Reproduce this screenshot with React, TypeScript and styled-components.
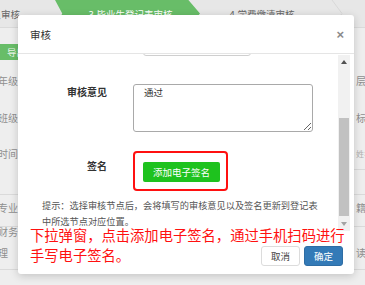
import React from 'react';
import styled, { createGlobalStyle } from 'styled-components';

const GlobalStyle = createGlobalStyle`
  html, body {
    margin: 0;
    padding: 0;
  }
  body {
    font-family: "Noto Sans CJK SC", "Noto Sans", sans-serif;
    background: #eeeeee;
  }
`;

type RowData = {
  h: number;
  left?: string[];
  right?: string[];
  button?: boolean;
  line?: boolean;
  small?: boolean;
  top?: boolean;
};

const rows: RowData[] = [
  { h: 32, button: true },
  { h: 28, left: ['年级'], right: ['层次'] },
  { h: 44, left: ['班级'], right: ['标识'] },
  { h: 26, left: ['时间'], right: ['姓名'], small: true },
  { h: 24, line: true },
  { h: 31, left: ['专业'], right: ['籍贯'], line: true },
  { h: 42, left: ['财务', '理'], right: ['\u00a0', '读'], line: true, top: true },
];

const App = () => {
  return (
    <>
      <GlobalStyle />
      <Page>
        <StepBar>
          <Step $width={55} $align="flex-end" $pad={35}>
            2.辅导员审核
          </Step>
          <ActiveStep>3.毕业生登记表审核</ActiveStep>
          <Step $width={124} $align="center" $pad={0}>
            4.学费缴清审核
          </Step>
          <Divider width="14" height="27" viewBox="0 0 14 27">
            <polyline points="2,0 12,13.5 2,27" fill="none" stroke="#d8d8d8" strokeWidth="1" />
          </Divider>
        </StepBar>

        <FormArea>
          <SideCol $side="left">
            {rows.map((r, i) => (
              <SideRow key={i} $h={r.h} $line={r.line} $side="left" $top={r.top}>
                {r.button && <GreenTab>导出</GreenTab>}
                {r.left && (
                  <SideLabel>
                    {r.left.map((t, j) => (
                      <div key={j}>{t}</div>
                    ))}
                  </SideLabel>
                )}
              </SideRow>
            ))}
          </SideCol>
          <SideCol $side="right">
            {rows.map((r, i) => (
              <SideRow key={i} $h={r.h} $line={r.line || r.small} $side="right" $top={r.top}>
                {r.right && (
                  <SideLabel $small={r.small}>
                    {r.right.map((t, j) => (
                      <div key={j}>{t}</div>
                    ))}
                  </SideLabel>
                )}
              </SideRow>
            ))}
          </SideCol>
        </FormArea>

        <Modal>
          <ModalHeader>
            <ModalTitle>审核</ModalTitle>
            <CloseBtn>×</CloseBtn>
          </ModalHeader>

          <ModalBody>
            <ScrollArea>
              <ScrollInner $offset={24}>
                <FieldRow>
                  <FieldLabel />
                  <SelectBox />
                </FieldRow>

                <FieldRow $gap={28}>
                  <FieldLabel>审核意见</FieldLabel>
                  <Opinion readOnly defaultValue="通过" />
                </FieldRow>

                <FieldRow $gap={19}>
                  <FieldLabel $pt={7}>签名</FieldLabel>
                  <Highlight>
                    <SignButton>添加电子签名</SignButton>
                  </Highlight>
                </FieldRow>

                <Hint>提示：选择审核节点后，会将填写的审核意见以及签名更新到登记表中所选节点对应位置。</Hint>
              </ScrollInner>
            </ScrollArea>

            <Scrollbar>
              <ScrollArrow $dir="up" />
              <ScrollTrack>
                <ScrollThumb $top={49} $height={98} />
              </ScrollTrack>
              <ScrollArrow $dir="down" />
            </Scrollbar>
          </ModalBody>

          <ModalFooter>
            <FooterButton>取消</FooterButton>
            <FooterButton $primary>确定</FooterButton>
          </ModalFooter>

          <Annotation>
            下拉弹窗，点击添加电子签名，通过手机扫码进行
            <br />
            手写电子签名。
          </Annotation>
        </Modal>
      </Page>
    </>
  );
};

export default App;

const Page = styled.div`
  position: relative;
  width: 365px;
  height: 285px;
  overflow: hidden;
  background: #eeeeee;
`;

const StepBar = styled.div`
  display: flex;
  align-items: center;
  height: 27px;
  background: #e7e7e7;
  border-bottom: 1px solid #dadada;
  overflow: hidden;
`;

const Step = styled.div<{ $width: number; $align: string; $pad: number }>`
  display: flex;
  justify-content: ${p => p.$align};
  align-items: center;
  flex: none;
  width: ${p => p.$width}px;
  height: 100%;
  padding-right: ${p => p.$pad}px;
  box-sizing: border-box;
  overflow: hidden;
  white-space: nowrap;
  font-size: 9.5px;
  color: #666;
`;

const ActiveStep = styled.div`
  display: flex;
  align-items: center;
  justify-content: center;
  flex: none;
  width: 145px;
  height: 100%;
  padding-left: 6px;
  box-sizing: border-box;
  background: #68bd68;
  clip-path: polygon(0 0, 92% 0, 100% 50%, 92% 100%, 0 100%, 5% 50%);
  font-size: 9.5px;
  color: #ffffff;
  white-space: nowrap;
`;

const Divider = styled.svg`
  flex: none;
  margin-left: 6px;
`;

const FormArea = styled.div`
  display: flex;
  justify-content: space-between;
  padding-top: 8px;
`;

const SideCol = styled.div<{ $side: 'left' | 'right' }>`
  display: flex;
  flex-direction: column;
  width: ${p => (p.$side === 'left' ? 18 : 11)}px;
  overflow: hidden;
`;

const SideRow = styled.div<{ $h: number; $line?: boolean; $side: 'left' | 'right'; $top?: boolean }>`
  display: flex;
  align-items: ${p => (p.$top ? 'flex-start' : 'center')};
  justify-content: ${p => (p.$side === 'left' ? 'flex-end' : 'flex-start')};
  height: ${p => p.$h}px;
  border-bottom: 1px solid ${p => (p.$line ? '#dadada' : 'transparent')};
  white-space: nowrap;
`;

const SideLabel = styled.div<{ $small?: boolean }>`
  margin-top: -6px;
  padding-left: 2px;
  font-size: ${p => (p.$small ? 8 : 10)}px;
  line-height: 21px;
  color: ${p => (p.$small ? '#b0b0b0' : '#8e8e8e')};
`;

const GreenTab = styled.div`
  display: flex;
  align-items: center;
  flex: none;
  width: 18px;
  height: 16px;
  padding-left: 7px;
  box-sizing: border-box;
  background: #68bd68;
  font-size: 9.5px;
  color: #e8f5e8;
  white-space: nowrap;
  overflow: hidden;
`;

const Modal = styled.div`
  position: absolute;
  left: 18px;
  top: 15px;
  width: 336px;
  height: 259px;
  display: flex;
  flex-direction: column;
  background: #ffffff;
  border-radius: 3px;
  box-shadow: 0 2px 8px rgba(0, 0, 0, 0.18);
  overflow: hidden;
`;

const ModalHeader = styled.div`
  display: flex;
  align-items: center;
  justify-content: space-between;
  flex: none;
  height: 38px;
  padding: 0 10px 0 12px;
  border-bottom: 1px solid #e5e5e5;
`;

const ModalTitle = styled.div`
  font-size: 10.5px;
  color: #333;
`;

const CloseBtn = styled.div`
  font-family: "Liberation Sans", Arial, sans-serif;
  font-size: 13px;
  font-weight: bold;
  color: #8a8a8a;
`;

const ModalBody = styled.div`
  display: flex;
  flex: none;
  height: 177px;
`;

const ScrollArea = styled.div`
  flex: 1;
  overflow: hidden;
`;

const ScrollInner = styled.div<{ $offset: number }>`
  margin-top: -${p => p.$offset}px;
`;

const FieldRow = styled.div<{ $gap?: number }>`
  display: grid;
  grid-template-columns: 89px 1fr;
  column-gap: 26px;
  align-items: start;
  margin-top: ${p => p.$gap ?? 0}px;
`;

const FieldLabel = styled.div<{ $pt?: number }>`
  padding-top: ${p => p.$pt ?? 0}px;
  text-align: right;
  font-size: 10px;
  line-height: 16px;
  font-weight: bold;
  color: #333;
`;

const SelectBox = styled.div`
  width: 108px;
  height: 26px;
  margin-left: 10px;
  border: 1px solid #cfcfcf;
  border-radius: 3px;
  box-sizing: border-box;
`;

const Opinion = styled.textarea`
  display: block;
  width: 180px;
  height: 48px;
  margin: 0;
  padding: 0 10px;
  box-sizing: border-box;
  border: 1px solid #a9a9a9;
  border-radius: 3px;
  font-family: "Noto Sans CJK SC", "Noto Sans", sans-serif;
  font-size: 9.5px;
  line-height: 14px;
  color: #333;
  outline: none;
`;

const Highlight = styled.div`
  width: 95px;
  height: 40px;
  padding: 9px 0 0 8px;
  box-sizing: border-box;
  border: 2px solid #ff1010;
  border-radius: 4px;
`;

const SignButton = styled.div`
  display: flex;
  align-items: center;
  justify-content: center;
  width: 77px;
  height: 20px;
  background: #1ec21e;
  border-radius: 2px;
  font-size: 9.5px;
  color: #ffffff;
`;

const Hint = styled.div`
  margin-top: 7px;
  padding: 0 18px 0 24px;
  font-size: 9.2px;
  line-height: 15.5px;
  color: #555;
`;

const Scrollbar = styled.div`
  display: flex;
  flex-direction: column;
  flex: none;
  width: 12px;
  margin: 1px 4px 0 0;
  background: #f1f1f1;
`;

const ScrollArrow = styled.div<{ $dir: 'up' | 'down' }>`
  flex: none;
  height: 14px;
  display: flex;
  align-items: center;
  justify-content: center;
  &::before {
    content: '';
    border-left: 3.5px solid transparent;
    border-right: 3.5px solid transparent;
    ${p =>
      p.$dir === 'up'
        ? 'border-bottom: 4px solid #505050;'
        : 'border-top: 4px solid #a3a3a3;'}
  }
`;

const ScrollTrack = styled.div`
  flex: 1;
  padding: 0 1px;
`;

const ScrollThumb = styled.div<{ $top: number; $height: number }>`
  margin-top: ${p => p.$top}px;
  height: ${p => p.$height}px;
  background: #c1c1c1;
`;

const ModalFooter = styled.div`
  display: flex;
  justify-content: flex-end;
  align-items: flex-start;
  gap: 4px;
  flex: 1;
  padding: 15px 11px 0 0;
`;

const FooterButton = styled.div<{ $primary?: boolean }>`
  display: flex;
  align-items: center;
  justify-content: center;
  width: 39px;
  height: 20px;
  box-sizing: border-box;
  border: 1px solid ${p => (p.$primary ? '#2e6da4' : '#dcdcdc')};
  border-radius: 3px;
  background: ${p => (p.$primary ? '#337ab7' : '#ffffff')};
  font-size: 9.5px;
  color: ${p => (p.$primary ? '#ffffff' : '#444')};
`;

const Annotation = styled.div`
  position: absolute;
  left: 12px;
  top: 210px;
  font-size: 14.3px;
  line-height: 20px;
  color: #ff1010;
  white-space: nowrap;
`;
